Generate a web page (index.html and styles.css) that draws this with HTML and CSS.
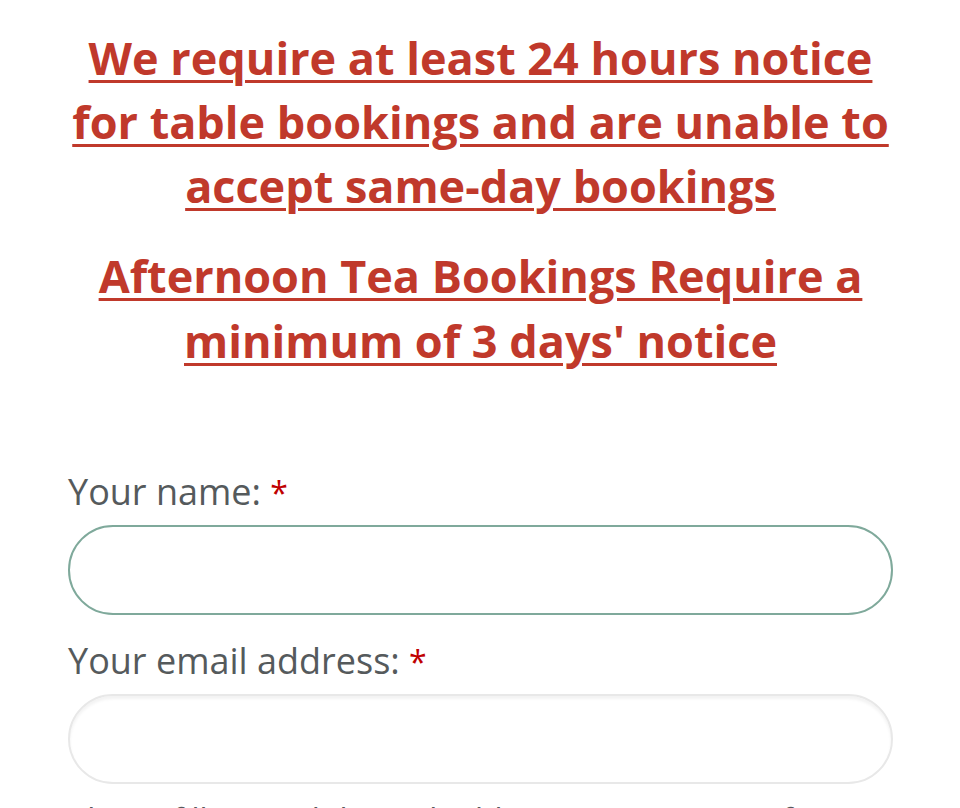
FILE: index.html
```html
<!DOCTYPE html>
<html>
<head>
  <meta name="viewport" content="width=device-width, initial-scale=1.0">
  <title>Table Bookings</title>
  <link rel="stylesheet" href="styles.css">
</head>
<body>
  <div class="container">
    <h2 class="notice"><a href="#">We require at least 24 hours notice for table bookings and are unable to accept same-day bookings</a></h2>
    <h2 class="notice notice-tea"><a href="#">Afternoon Tea Bookings Require a minimum of 3 days' notice</a></h2>

    <form class="booking-form">
      <div class="field">
        <label for="name">Your name: <span class="required">*</span></label>
        <input type="text" id="name" class="active">
      </div>
      <div class="field">
        <label for="email">Your email address: <span class="required">*</span></label>
        <input type="email" id="email">
        <p class="hint">Please fill in a valid email address so we can confirm</p>
      </div>
    </form>
  </div>
</body>
</html>
```

FILE: styles.css
```css
body {
  margin: 0;
  padding: 0;
  font-family: "Open Sans", Arial, sans-serif;
  background: #ffffff;
  overflow: hidden;
}

.container {
  padding: 26px 67px 0 68px;
}

.notice {
  margin: 0;
  text-align: center;
  font-size: 45px;
  font-weight: 700;
  line-height: 64px;
}

.notice a {
  color: #c0392b;
  text-decoration: underline;
  text-decoration-thickness: 3px;
  text-underline-offset: 5px;
}

.notice-tea {
  margin-top: 25px;
  line-height: 65px;
}

.booking-form {
  margin-top: 97px;
}

.field {
  margin-bottom: 24px;
}

.field label {
  display: block;
  font-size: 36px;
  line-height: 44px;
  color: #555a5c;
  margin-bottom: 10px;
}

.required {
  color: #c00000;
  font-size: 32px;
}

.field input {
  display: block;
  width: 100%;
  height: 90px;
  box-sizing: border-box;
  border: 2px solid #e8e8e8;
  border-radius: 45px;
  background: #ffffff;
  box-shadow: inset 0 3px 3px rgba(0, 0, 0, 0.05);
  outline: none;
}

.field input.active {
  border-color: #7fa99b;
  box-shadow: none;
}

.hint {
  margin: 14px 0 0;
  font-size: 32px;
  line-height: 44px;
  color: #555a5c;
}
```
